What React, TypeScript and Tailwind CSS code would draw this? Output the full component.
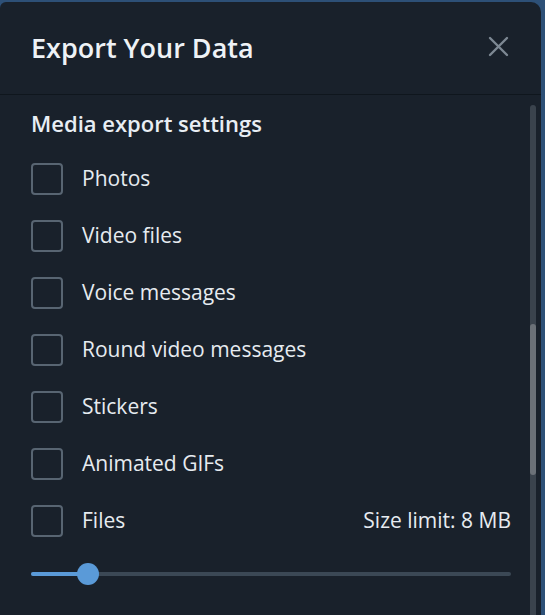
import { useState } from 'react';

const items = ['Photos', 'Video files', 'Voice messages', 'Round video messages', 'Stickers', 'Animated GIFs', 'Files'];

function Checkbox({ checked, onChange }: { checked: boolean; onChange: () => void }) {
  return (
    <button
      type="button"
      onClick={onChange}
      className="h-[32px] w-[32px] flex-shrink-0 rounded-[4px] border-2 border-[#586572]"
      style={{ background: checked ? '#5a9ad8' : 'transparent' }}
    />
  );
}

export default function App() {
  const [checked, setChecked] = useState<Record<string, boolean>>({});

  return (
    <div
      className="h-[615px] w-[545px] overflow-hidden bg-[#2d5077] pt-[2px]"
      style={{ fontFamily: '"Open Sans", "Noto Sans", sans-serif' }}
    >
      <div className="flex h-[613px] w-[541px] flex-col rounded-tl-[6px] rounded-tr-[10px] bg-[#19212b]">
        <div className="flex h-[93px] items-center justify-between border-b border-[#0f161d] pl-[31px] pr-[32px]">
          <h1 className="text-[27px] font-semibold leading-[36px] text-[#eef2f6]">Export Your Data</h1>
          <svg width="21" height="21" viewBox="0 0 21 21" className="mb-[3px]">
            <path d="M2 2 L19 19 M19 2 L2 19" stroke="#7d8893" strokeWidth="2.4" strokeLinecap="round" />
          </svg>
        </div>

        <div className="relative flex-1">
          <div className="pl-[31px] pr-[30px] pt-[13px]">
            <div className="text-[22px] font-semibold leading-[30px] text-[#e8eef4]">Media export settings</div>
            <div className="mt-[25px] flex flex-col gap-[25px]">
              {items.map((label) => (
                <div key={label} className="flex h-[32px] items-center">
                  <Checkbox
                    checked={!!checked[label]}
                    onChange={() => setChecked((c) => ({ ...c, [label]: !c[label] }))}
                  />
                  <span className="ml-[19px] text-[21px] text-[#e6ebf0]">{label}</span>
                  {label === 'Files' ? (
                    <span className="ml-auto text-[21px] text-[#e6ebf0]">Size limit: 8 MB</span>
                  ) : null}
                </div>
              ))}
            </div>
            <div className="relative mt-[26px] h-[22px] w-[480px]">
              <div className="absolute left-0 right-0 top-[9px] h-[4px] rounded-full bg-[#3b4855]" />
              <div className="absolute left-0 top-[9px] h-[4px] w-[57px] rounded-full bg-[#5a9ad8]" />
              <div className="absolute left-[46px] top-0 h-[22px] w-[22px] rounded-full bg-[#5a9ad8]" />
            </div>
          </div>

          <div className="absolute right-[5px] top-[10px] h-[520px] w-[6px] rounded-full bg-[#3a434d]">
            <div className="absolute left-0 top-[219px] h-[151px] w-[6px] rounded-full bg-[#6b7178]" />
          </div>
        </div>
      </div>
    </div>
  );
}
